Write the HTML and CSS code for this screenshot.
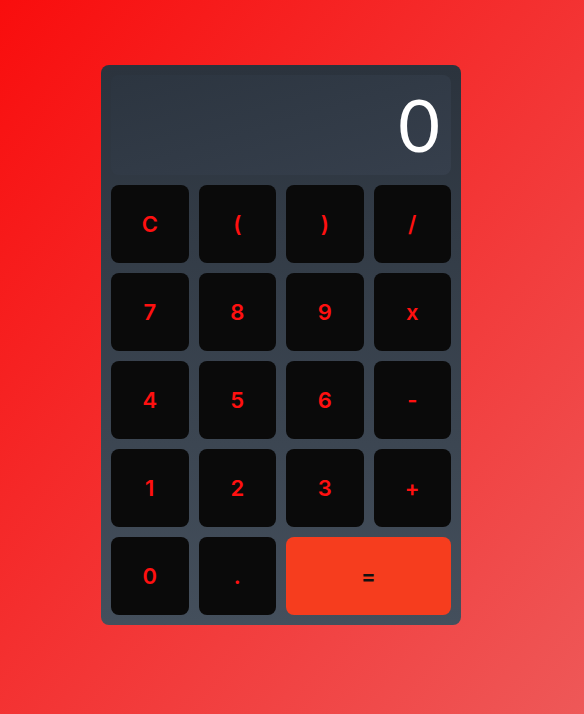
FILE: index.html
```html
<!DOCTYPE html>
<html>
<head>
<meta charset="utf-8">
<link rel="stylesheet" href="styles.css">
</head>
<body>
<div class="calc">
  <div class="display">0</div>
  <div class="keys">
    <button class="key">C</button>
    <button class="key">(</button>
    <button class="key">)</button>
    <button class="key">/</button>
    <button class="key">7</button>
    <button class="key">8</button>
    <button class="key">9</button>
    <button class="key">x</button>
    <button class="key">4</button>
    <button class="key">5</button>
    <button class="key">6</button>
    <button class="key">-</button>
    <button class="key">1</button>
    <button class="key">2</button>
    <button class="key">3</button>
    <button class="key">+</button>
    <button class="key">0</button>
    <button class="key">.</button>
    <button class="key equals">=</button>
  </div>
</div>
</body>
</html>
```

FILE: styles.css
```css
html, body {
  margin: 0;
  height: 100%;
}
body {
  box-sizing: border-box;
  min-height: 100vh;
  display: flex;
  justify-content: center;
  align-items: center;
  padding: 0 22px 24px 0;
  background: linear-gradient(to bottom right, #f90d0d, #ee5858);
  font-family: Inter, "Noto Sans", sans-serif;
}
.calc {
  width: 360px;
  box-sizing: border-box;
  padding: 10px;
  border-radius: 8px;
  background: linear-gradient(to bottom, #2b333d, #444f5c);
  display: flex;
  flex-direction: column;
  gap: 10px;
}
.display {
  height: 100px;
  box-sizing: border-box;
  border-radius: 8px;
  background: linear-gradient(to bottom right, #2c3540, #363f4c);
  color: #ffffff;
  font-family: Lato, sans-serif;
  font-size: 72px;
  font-weight: 400;
  line-height: 98px;
  text-align: right;
  padding-right: 11px;
}
.keys {
  display: grid;
  grid-template-columns: repeat(4, 1fr);
  grid-auto-rows: 78px;
  gap: 10px;
}
.key {
  border: none;
  border-radius: 8px;
  background: #0a0a0a;
  color: #ff1010;
  font-family: Inter, "Noto Sans", sans-serif;
  font-size: 22px;
  font-weight: 600;
  padding: 0;
}
.equals {
  grid-column: span 2;
  background: #f63d1e;
  color: #111111;
}
```
